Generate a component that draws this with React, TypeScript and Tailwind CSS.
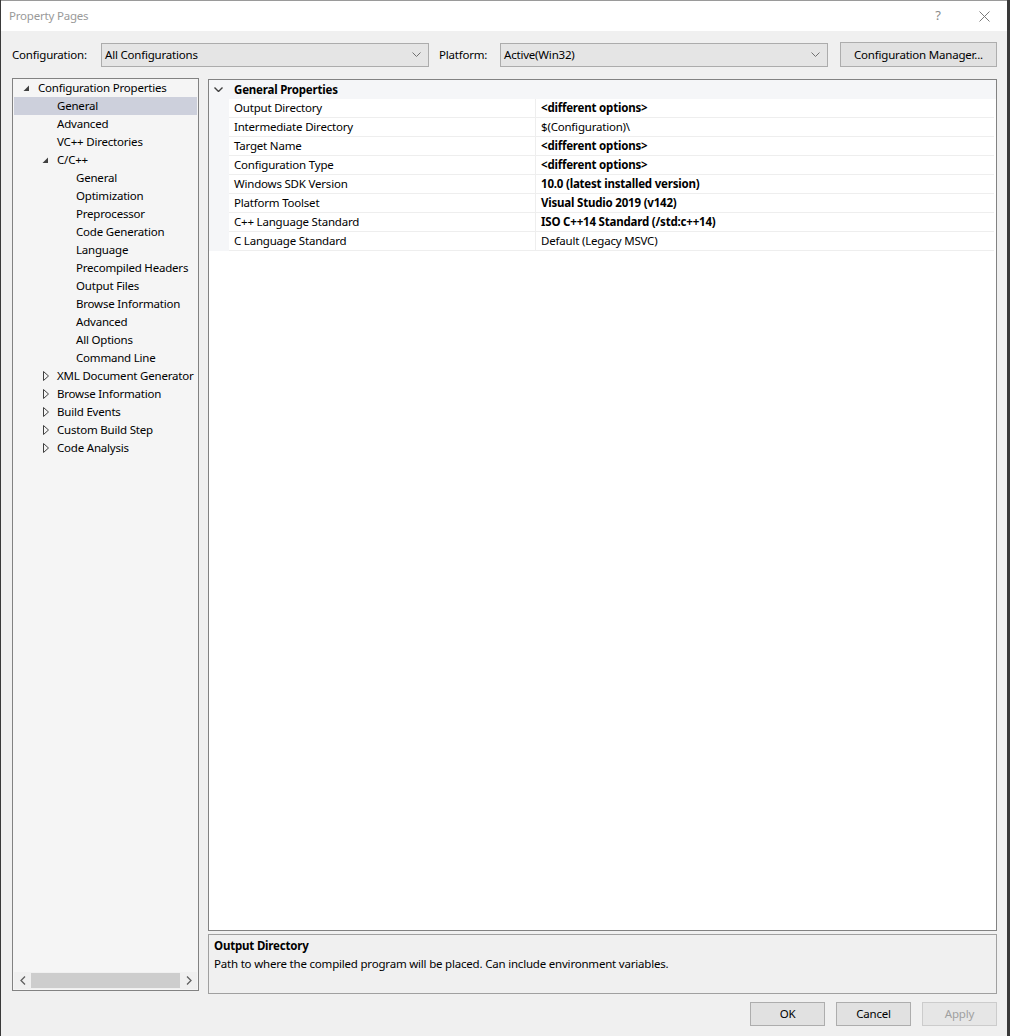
import React from 'react';

const font = { fontFamily: '"Noto Sans", "Open Sans", sans-serif', letterSpacing: '-0.2px' };

type TreeItem = { label: string; indent: number; arrow?: 'open' | 'closed'; selected?: boolean };

const treeItems: TreeItem[] = [
  { label: 'Configuration Properties', indent: 0, arrow: 'open' },
  { label: 'General', indent: 1, selected: true },
  { label: 'Advanced', indent: 1 },
  { label: 'VC++ Directories', indent: 1 },
  { label: 'C/C++', indent: 1, arrow: 'open' },
  { label: 'General', indent: 2 },
  { label: 'Optimization', indent: 2 },
  { label: 'Preprocessor', indent: 2 },
  { label: 'Code Generation', indent: 2 },
  { label: 'Language', indent: 2 },
  { label: 'Precompiled Headers', indent: 2 },
  { label: 'Output Files', indent: 2 },
  { label: 'Browse Information', indent: 2 },
  { label: 'Advanced', indent: 2 },
  { label: 'All Options', indent: 2 },
  { label: 'Command Line', indent: 2 },
  { label: 'XML Document Generator', indent: 1, arrow: 'closed' },
  { label: 'Browse Information', indent: 1, arrow: 'closed' },
  { label: 'Build Events', indent: 1, arrow: 'closed' },
  { label: 'Custom Build Step', indent: 1, arrow: 'closed' },
  { label: 'Code Analysis', indent: 1, arrow: 'closed' },
];

const props: { name: string; value: string; bold: boolean }[] = [
  { name: 'Output Directory', value: '<different options>', bold: true },
  { name: 'Intermediate Directory', value: '$(Configuration)\\', bold: false },
  { name: 'Target Name', value: '<different options>', bold: true },
  { name: 'Configuration Type', value: '<different options>', bold: true },
  { name: 'Windows SDK Version', value: '10.0 (latest installed version)', bold: true },
  { name: 'Platform Toolset', value: 'Visual Studio 2019 (v142)', bold: true },
  { name: 'C++ Language Standard', value: 'ISO C++14 Standard (/std:c++14)', bold: true },
  { name: 'C Language Standard', value: 'Default (Legacy MSVC)', bold: false },
];

function Chevron({ dark }: { dark?: boolean }) {
  return (
    <svg width="9" height="5" viewBox="0 0 9 5">
      <path
        d="M0.5 0.5 L4.5 4.5 L8.5 0.5"
        fill="none"
        stroke={dark ? '#404040' : '#707070'}
        strokeWidth={dark ? 1.4 : 1}
      />
    </svg>
  );
}

function Combo({ value, width }: { value: string; width: string }) {
  return (
    <div className={`${width} h-[24px] flex items-center justify-between bg-[#e5e5e5] border border-[#acacac] pl-[3px] pr-[7px] text-black`}>
      <span>{value}</span>
      <Chevron />
    </div>
  );
}

function TreeArrow({ kind }: { kind: 'open' | 'closed' }) {
  if (kind === 'open') {
    return (
      <svg width="7" height="7" viewBox="0 0 7 7">
        <path d="M6 0.5 L6 6 L0.5 6 Z" fill="#404040" />
      </svg>
    );
  }
  return (
    <svg width="6" height="10" viewBox="0 0 6 10">
      <path d="M0.5 0.5 L5.5 5 L0.5 9.5 Z" fill="none" stroke="#404040" strokeWidth="1" />
    </svg>
  );
}

function Button({ label, disabled }: { label: string; disabled?: boolean }) {
  return (
    <div
      className={`w-[75px] h-[24px] flex items-center justify-center border ${
        disabled ? 'bg-[#e6e6e6] border-[#cccccc] text-[#a0a0a0]' : 'bg-[#e1e1e1] border-[#adadad] text-black'
      }`}
    >
      {label}
    </div>
  );
}

export default function App() {
  return (
    <div
      className="w-[1010px] h-[1036px] flex flex-col bg-[#f0f0f0] border-l border-r-[3px] border-[#3a3a3a] text-black text-[11.5px] overflow-hidden"
      style={font}
    >
      {/* Title bar */}
      <div className="h-[31px] bg-white flex items-center justify-between pl-[8px] border-t border-[#9a9a9a]">
        <span className="text-[#999999]">Property Pages</span>
        <div className="flex items-center">
          <span className="w-[46px] text-center text-[13px] text-[#8a8a8a]">?</span>
          <div className="w-[46px] flex justify-center">
            <svg width="11" height="11" viewBox="0 0 11 11">
              <path d="M0.5 0.5 L10.5 10.5 M10.5 0.5 L0.5 10.5" stroke="#7a7a7a" strokeWidth="1" />
            </svg>
          </div>
        </div>
      </div>

      {/* Configuration row */}
      <div className="flex items-center mt-[11px] pl-[11px] pr-[10px]">
        <span className="w-[89px]">Configuration:</span>
        <Combo value="All Configurations" width="w-[328px]" />
        <span className="ml-[10px] w-[61px]">Platform:</span>
        <Combo value="Active(Win32)" width="w-[328px]" />
        <div className="ml-[12px] w-[157px] h-[25px] flex items-center justify-center bg-[#e1e1e1] border border-[#adadad]">
          Configuration Manager...
        </div>
      </div>

      {/* Main area */}
      <div className="flex mt-[11px] pl-[11px] pr-[10px] gap-[9px]">
        {/* Tree */}
        <div className="w-[187px] h-[913px] border border-[#828282] bg-[#f5f5f5] flex flex-col px-[1px] pb-[1px]">
          <div className="flex-1">
            {treeItems.map((it, i) => (
              <div
                key={i}
                className={`h-[18px] flex items-center whitespace-nowrap overflow-hidden ${it.selected ? 'bg-[#cdd0dc]' : ''}`}
              >
                <div
                  className={`shrink-0 flex justify-end pr-[8px] ${
                    it.indent === 0 ? 'w-[24px]' : it.indent === 1 ? 'w-[43px]' : 'w-[62px]'
                  }`}
                >
                  {it.arrow ? <TreeArrow kind={it.arrow} /> : null}
                </div>
                <span>{it.label}</span>
              </div>
            ))}
          </div>
          <div className="h-[17px] flex items-center bg-[#f0f0f0]">
            <div className="w-[17px] flex justify-center">
              <svg width="6" height="9" viewBox="0 0 6 9">
                <path d="M5 0.5 L1 4.5 L5 8.5" fill="none" stroke="#606060" strokeWidth="1.3" />
              </svg>
            </div>
            <div className="flex-1 h-[15px] bg-[#cdcdcd]" />
            <div className="w-[17px] flex justify-center">
              <svg width="6" height="9" viewBox="0 0 6 9">
                <path d="M1 0.5 L5 4.5 L1 8.5" fill="none" stroke="#606060" strokeWidth="1.3" />
              </svg>
            </div>
          </div>
        </div>

        {/* Right column */}
        <div className="flex-1 flex flex-col mt-[1px]">
          <div className="h-[852px] border border-[#828282] bg-white flex flex-col">
            <div className="h-[19px] flex items-center bg-[#f5f6f8]">
              <div className="w-[25px] flex justify-center pr-[7px]">
                <Chevron dark />
              </div>
              <span className="font-bold">General Properties</span>
            </div>
            <div className="flex">
              <div className="w-[20px] bg-[#f5f6f8]" />
              <div className="flex-1 mr-[2px]">
                {props.map((p, i) => (
                  <div key={i} className="h-[19px] flex items-center border-b border-[#eeeeee]">
                    <span className="w-[307px] pl-[5px] h-full flex items-center border-r border-[#eeeeee]">{p.name}</span>
                    <span className={`pl-[5px] ${p.bold ? 'font-bold' : ''}`}>{p.value}</span>
                  </div>
                ))}
              </div>
            </div>
          </div>

          <div className="mt-[3px] h-[60px] border border-[#a0a0a0] bg-[#f0f0f0] px-[5px] pt-[2px]">
            <div className="font-bold leading-[18px]">Output Directory</div>
            <div className="leading-[18px]">Path to where the compiled program will be placed. Can include environment variables.</div>
          </div>
        </div>
      </div>

      {/* Buttons */}
      <div className="flex justify-end gap-[11px] mt-[8px] pr-[10px]">
        <Button label="OK" />
        <Button label="Cancel" />
        <Button label="Apply" disabled />
      </div>
    </div>
  );
}
